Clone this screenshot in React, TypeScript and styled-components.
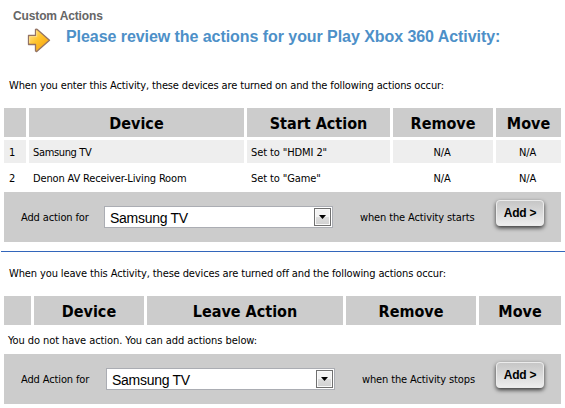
import React from 'react';
import styled, { createGlobalStyle } from 'styled-components';

const GlobalStyle = createGlobalStyle`
  * { box-sizing: border-box; }
  body {
    margin: 0;
    background: #fff;
    color: #000;
    font: 11px/14px "DejaVu Sans Condensed", "DejaVu Sans", sans-serif;
    letter-spacing: -0.13px;
  }
`;

const Page = styled.main`
  width: 565px;
  height: 408px;
  overflow: hidden;
  white-space: nowrap;
`;

const Caption = styled.h1`
  margin: 0;
  padding: 9px 0 0 13px;
  height: 24px;
  font: bold 12px/15px "Liberation Sans", Arial, sans-serif;
  letter-spacing: -0.13px;
  color: #666;
`;

const TitleRow = styled.div`
  display: flex;
  align-items: flex-start;
  height: 55px;
  padding: 4px 0 0 27px;
`;

const Title = styled.h2`
  margin: 0 0 0 15px;
  font: bold 16px/18px "Liberation Sans", Arial, sans-serif;
  letter-spacing: -0.06px;
  color: #4d90c8;
`;

const Intro = styled.p<{ $spacing?: number }>`
  margin: 0;
  padding-left: 9px;
  height: 29px;
  letter-spacing: ${(p) => p.$spacing ?? -0.13}px;
`;

const Grid = styled.div<{ $columns: string }>`
  display: grid;
  grid-template-columns: ${(p) => p.$columns};
  gap: 3px;
  width: 557px;
  margin-left: 4px;
`;

const HeaderCell = styled.div`
  height: 29px;
  background: #ccc;
  font-size: 16px;
  font-weight: bold;
  line-height: 31px;
  letter-spacing: 0;
  text-align: center;
`;

const Cell = styled.div<{ $shaded?: boolean; $spacing?: number }>`
  height: 23px;
  padding-left: 4px;
  background: ${(p) => (p.$shaded ? '#eee' : '#fff')};
  line-height: 26px;
  letter-spacing: ${(p) => p.$spacing ?? -0.1}px;
`;

const NumberCell = styled(Cell)`
  padding-left: 5px;
`;

const CenteredCell = styled(Cell)`
  padding: 0 2px 0 0;
  text-align: center;
`;

const AddBar = styled.div`
  display: flex;
  width: 557px;
  height: 50px;
  margin-left: 4px;
  background: #ccc;
`;

const BarLabel = styled.span<{ $width: number }>`
  width: ${(p) => p.$width}px;
  padding: 19px 0 0 17px;
`;

const SuffixLabel = styled(BarLabel)`
  padding-left: 27px;
`;

const Select = styled.div`
  display: flex;
  justify-content: space-between;
  width: 229px;
  height: 22px;
  margin-top: 14px;
  padding: 1px 1px 1px 5px;
  border: 1px solid #abadb3;
  background: #fff;
  font: 14px/20px "Liberation Sans", Arial, sans-serif;
  letter-spacing: -0.28px;
`;

const DropButton = styled.span`
  display: flex;
  align-items: center;
  justify-content: center;
  width: 17px;
  height: 18px;
  border: 1px solid #707070;
  box-shadow: inset 0 0 0 1px #fafafa;
  background: linear-gradient(#f3f3f3 0 48%, #ddd 52%, #d0d0d0);
`;

const AddButton = styled.button`
  width: 48px;
  height: 26px;
  margin: 8px 0 0;
  padding: 0 0 1px;
  border: 1px solid #ececec;
  border-radius: 4px;
  background: linear-gradient(#c6c6c6, #ededed);
  box-shadow: 0 2px 4px rgba(0, 0, 0, 0.75);
  color: #000;
  font: bold 12px/20px "Liberation Sans", Arial, sans-serif;
  letter-spacing: -0.25px;
`;

const Divider = styled.hr`
  height: 1px;
  margin: 9px 0 15px 1px;
  border: 0;
  background: #36b;
`;

const Empty = styled.p`
  margin: 0 0 0 4px;
  height: 29px;
  padding: 9px 0 0 4px;
  letter-spacing: -0.07px;
`;

const Spacer = styled.div`
  height: 3px;
`;

const ArrowIcon = () => (
  <svg width="24" height="25" viewBox="0 0 24 25">
    <defs>
      <linearGradient id="arrow" x1="0" y1="0" x2="1" y2="1">
        <stop offset="0" stopColor="#ffe9a0" />
        <stop offset=".45" stopColor="#ffc52d" />
        <stop offset="1" stopColor="#f49a0a" />
      </linearGradient>
    </defs>
    <path
      d="M1.5 7.5H8.5V1.5Q9 .8 10 1.3L22.5 12.3L10 23.3Q9 23.8 8.5 23V16.5H1.5Z"
      fill="url(#arrow)"
      stroke="#937365"
      strokeWidth="1.3"
      strokeLinejoin="round"
    />
    <path d="M2.6 15V8.6H9.7V3" fill="none" stroke="#ffe08a" strokeWidth=".9" />
  </svg>
);

interface AddActionProps {
  label: string;
  suffix: string;
  labelWidth: number;
}

const AddAction = ({ label, suffix, labelWidth }: AddActionProps) => (
  <AddBar>
    <BarLabel $width={labelWidth}>{label}</BarLabel>
    <Select>
      Samsung TV
      <DropButton>
        <svg width="7" height="4" viewBox="0 0 7 4">
          <path d="M0 0H7L3.5 4Z" />
        </svg>
      </DropButton>
    </Select>
    <SuffixLabel $width={263 - labelWidth}>{suffix}</SuffixLabel>
    <AddButton>Add &gt;</AddButton>
  </AddBar>
);

const rows = [
  { device: 'Samsung TV', action: 'Set to "HDMI 2"', spacing: -0.35 },
  { device: 'Denon AV Receiver-Living Room', action: 'Set to "Game"', spacing: -0.15 },
];

export default function App() {
  return (
    <Page>
      <GlobalStyle />
      <Caption>Custom Actions</Caption>
      <TitleRow>
        <ArrowIcon />
        <Title>Please review the actions for your Play Xbox 360 Activity:</Title>
      </TitleRow>
      <Intro>
        When you enter this Activity, these devices are turned on and the following actions occur:
      </Intro>
      <Grid $columns="22px 215px 143px 100px 65px">
        <HeaderCell />
        <HeaderCell>Device</HeaderCell>
        <HeaderCell>Start Action</HeaderCell>
        <HeaderCell>Remove</HeaderCell>
        <HeaderCell>Move</HeaderCell>
        {rows.map((row, i) => {
          const shaded = i % 2 === 0;
          return (
            <React.Fragment key={row.device}>
              <NumberCell $shaded={shaded}>{i + 1}</NumberCell>
              <Cell $shaded={shaded} $spacing={row.spacing}>{row.device}</Cell>
              <Cell $shaded={shaded}>{row.action}</Cell>
              <CenteredCell $shaded={shaded}>N/A</CenteredCell>
              <CenteredCell $shaded={shaded}>N/A</CenteredCell>
            </React.Fragment>
          );
        })}
      </Grid>
      <Spacer />
      <AddAction label="Add action for" suffix="when the Activity starts" labelWidth={100} />
      <Divider />
      <Intro $spacing={-0.12}>
        When you leave this Activity, these devices are turned off and the following actions occur:
      </Intro>
      <Grid $columns="27px 110px 196px 130px 82px">
        <HeaderCell />
        <HeaderCell>Device</HeaderCell>
        <HeaderCell>Leave Action</HeaderCell>
        <HeaderCell>Remove</HeaderCell>
        <HeaderCell>Move</HeaderCell>
      </Grid>
      <Empty>You do not have action. You can add actions below:</Empty>
      <AddAction label="Add Action for" suffix="when the Activity stops" labelWidth={102} />
    </Page>
  );
}
